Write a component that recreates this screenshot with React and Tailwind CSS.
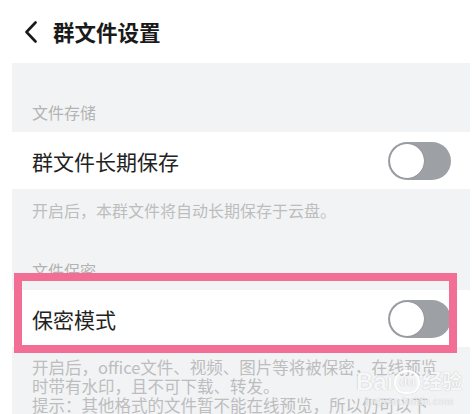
export default function App() {
    return (
        <div className="w-[472px] h-[414px] overflow-hidden bg-white font-['Noto_Sans_CJK_SC','Noto_Sans',sans-serif] relative">
            <div className="h-[63px] flex items-center pl-[24px]">
                <svg width="14" height="22" viewBox="0 0 14 22" fill="none">
                    <path d="M11.5 1.5 L2.5 11 L11.5 20.5" stroke="#1a1a1a" strokeWidth="2.6" strokeLinecap="round" strokeLinejoin="round" />
                </svg>
                <p className="ml-[15px] text-[21.5px] leading-[28px] font-bold text-[#1a1a1a]">群文件设置</p>
            </div>

            <div className="ml-[12px] mr-[2px] bg-[#f2f3f5] h-[351px]">
                <div className="h-[69px] flex items-end pb-[10px] pl-[20px]">
                    <p className="text-[16px] leading-[20px] text-[#b3b3b3]">文件存储</p>
                </div>
                <div className="h-[57px] bg-white flex items-center justify-between pl-[20px] pr-[19px]">
                    <p className="text-[21px] leading-[26px] text-[#222]">群文件长期保存</p>
                    <div className="w-[63px] h-[38px] rounded-full bg-[#9da0a5] p-[2px] flex items-center">
                        <div className="w-[34px] h-[34px] rounded-full bg-white shadow-[0_0_1px_rgba(0,0,0,0.4)]"></div>
                    </div>
                </div>
                <p className="pt-[11px] pl-[20px] text-[16px] leading-[20px] text-[#bdbdbd]">开启后，本群文件将自动长期保存于云盘。</p>
                <div className="h-[70px] flex items-end pb-[10px] pl-[20px]">
                    <p className="text-[16px] leading-[20px] text-[#b3b3b3]">文件保密</p>
                </div>
                <div className="relative h-[57px] bg-white flex items-center justify-between pl-[20px] pr-[19px]">
                    <p className="text-[21px] leading-[26px] text-[#222]">保密模式</p>
                    <div className="w-[63px] h-[38px] rounded-full bg-[#9da0a5] p-[2px] flex items-center">
                        <div className="w-[34px] h-[34px] rounded-full bg-white shadow-[0_0_1px_rgba(0,0,0,0.4)]"></div>
                    </div>
                    <div className="absolute left-[2px] top-[-17px] w-[443px] h-[80px] border-[8px] border-[#f36e94]"></div>
                </div>
                <div className="pt-[11px] pl-[20px] text-[16.5px] leading-[19px] text-[#bdbdbd]">
                    <p>开启后，office文件、视频、图片等将被保密，在线预览</p>
                    <p>时带有水印，且不可下载、转发。</p>
                    <p>提示：其他格式的文件暂不能在线预览，所以仍可以下</p>
                </div>
            </div>

            <div className="absolute left-[356px] top-[368px] flex flex-col items-center text-white/90 [text-shadow:0_0_1px_rgba(0,0,0,0.3)] font-['Liberation_Sans','Noto_Sans_CJK_SC',sans-serif]">
                <div className="flex items-center">
                    <span className="text-[24px] leading-[28px] font-bold">Bai</span>
                    <span className="ml-[1px] w-[26px] h-[24px] rounded-[12px_12px_10px_10px] border-[2px] border-white/90 flex items-center justify-center text-[13px] leading-[14px] font-bold shadow-[0_0_1px_rgba(0,0,0,0.3)]">du</span>
                    <span className="ml-[2px] text-[20px] leading-[26px] font-bold">经验</span>
                </div>
                <span className="text-[10px] leading-[11px] tracking-[0.5px]">jingyan.baidu.com</span>
            </div>
        </div>
    );
}
